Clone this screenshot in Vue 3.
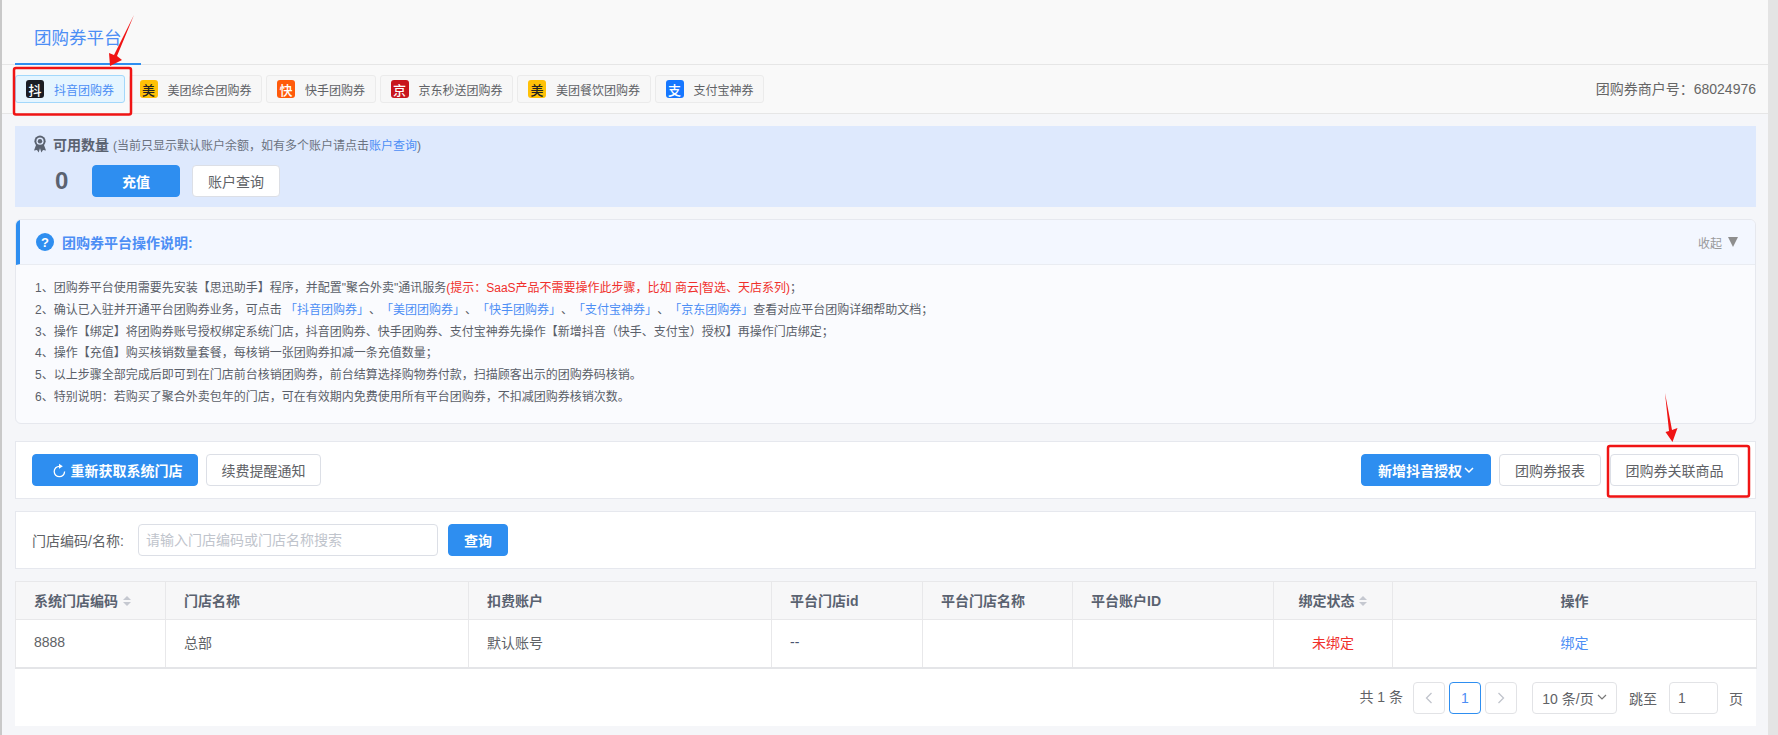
<template>
  <div class="page">
    <div class="rail"></div>

    <main class="main">
      <header class="tabs">
        <div class="tab-active">团购券平台</div>
      </header>

      <nav class="subbar">
        <div class="subtabs">
          <div
            v-for="item in platforms"
            :key="item.name"
            class="subtab"
            :class="{ active: item.active }"
          >
            <span class="logo" :class="item.cls">{{ item.mark }}</span>
            <span>{{ item.name }}</span>
          </div>
        </div>
        <div class="merchant">团购券商户号：68024976</div>
      </nav>

      <div class="content">
        <section class="balance">
          <div class="balance-title">
            <svg class="ribbon" width="14" height="18" viewBox="0 0 14 18">
              <path d="M3.2 9.5 1 15.5l3-.6 1.6 2.6L7 13.2l1.4 4.3 1.6-2.6 3 .6-2.2-6z" fill="#5a6270" />
              <circle cx="7" cy="6.2" r="5.6" fill="#5a6270" />
              <circle cx="7" cy="6.2" r="3.6" fill="#dee9fd" />
              <circle cx="7" cy="6.2" r="2.2" fill="#5a6270" />
            </svg>
            <strong>可用数量</strong>
            <span class="hint">(当前只显示默认账户余额，如有多个账户请点击<a class="link">账户查询</a>)</span>
          </div>
          <div class="balance-row">
            <span class="count">0</span>
            <button class="btn primary wide">充值</button>
            <button class="btn account">账户查询</button>
          </div>
        </section>

        <section class="guide">
          <div class="guide-head">
            <div class="guide-title">
              <span class="help">?</span>
              <span>团购券平台操作说明:</span>
            </div>
            <div class="collapse">收起 <span class="tri"></span></div>
          </div>
          <div class="guide-body">
            <p>1、团购券平台使用需要先安装【思迅助手】程序，并配置"聚合外卖"通讯服务<span class="red">(提示：SaaS产品不需要操作此步骤，比如 商云|智选、天店系列)</span>；</p>
            <p>2、确认已入驻并开通平台团购券业务，可点击 <a class="link">「抖音团购券」</a>、<a class="link">「美团团购券」</a>、<a class="link">「快手团购券」</a>、<a class="link">「支付宝神券」</a>、<a class="link">「京东团购券」</a>查看对应平台团购详细帮助文档；</p>
            <p>3、操作【绑定】将团购券账号授权绑定系统门店，抖音团购券、快手团购券、支付宝神券先操作【新增抖音（快手、支付宝）授权】再操作门店绑定；</p>
            <p>4、操作【充值】购买核销数量套餐，每核销一张团购券扣减一条充值数量；</p>
            <p>5、以上步骤全部完成后即可到在门店前台核销团购券，前台结算选择购物券付款，扫描顾客出示的团购券码核销。</p>
            <p>6、特别说明：若购买了聚合外卖包年的门店，可在有效期内免费使用所有平台团购券，不扣减团购券核销次数。</p>
          </div>
        </section>

        <section class="panel toolbar">
          <div class="group">
            <button class="btn primary refresh">
              <svg width="13" height="15" viewBox="0 0 13 15" fill="none">
                <path d="M11.6 8.5A5.2 5.2 0 1 1 6.4 3.3" stroke="#fff" stroke-width="1.3" />
                <path d="M6 .8 9.8 3.3 6 5.8z" fill="#fff" />
              </svg>
              重新获取系统门店
            </button>
            <button class="btn notify">续费提醒通知</button>
          </div>
          <div class="group">
            <button class="btn primary auth">
              新增抖音授权
              <svg width="10" height="7" viewBox="0 0 10 7" fill="none" stroke="#fff" stroke-width="1.5">
                <path d="M1 1l4 4 4-4" />
              </svg>
            </button>
            <button class="btn report">团购券报表</button>
            <button class="btn related">团购券关联商品</button>
          </div>
        </section>

        <section class="panel search">
          <label class="search-label">门店编码/名称:</label>
          <input class="search-input" placeholder="请输入门店编码或门店名称搜索" />
          <button class="btn primary query">查询</button>
        </section>

        <div class="result">
          <table class="table">
            <colgroup>
              <col v-for="col in columns" :key="col.title" :style="{ width: col.width + 'px' }" />
            </colgroup>
            <thead>
              <tr>
                <th v-for="col in columns" :key="col.title" :class="{ center: col.center }">
                  {{ col.title }}
                  <span v-if="col.sort" class="sorter"><i class="up"></i><i class="down"></i></span>
                </th>
              </tr>
            </thead>
            <tbody>
              <tr>
                <td>8888</td>
                <td>总部</td>
                <td>默认账号</td>
                <td class="dash">--</td>
                <td></td>
                <td></td>
                <td class="center red">未绑定</td>
                <td class="center"><a class="link">绑定</a></td>
              </tr>
            </tbody>
          </table>

          <div class="pager">
            <span class="total">共 1 条</span>
            <span class="page-btn muted">
              <svg width="8" height="12" viewBox="0 0 8 12" fill="none" stroke="#c0c4cc" stroke-width="1.3"><path d="M6.5 1 1.5 6l5 5" /></svg>
            </span>
            <span class="page-btn current">1</span>
            <span class="page-btn muted">
              <svg width="8" height="12" viewBox="0 0 8 12" fill="none" stroke="#c0c4cc" stroke-width="1.3"><path d="M1.5 1l5 5-5 5" /></svg>
            </span>
            <span class="page-size">
              10 条/页
              <svg width="10" height="7" viewBox="0 0 10 7" fill="none" stroke="#777" stroke-width="1.2"><path d="M1 1l4 4 4-4" /></svg>
            </span>
            <span class="jump">跳至</span>
            <span class="jump-input">1</span>
            <span class="jump-unit">页</span>
          </div>
        </div>
      </div>
    </main>

    <div class="scroll-strip"></div>

    <!-- annotations drawn on top of the screenshot -->
    <svg class="marks" width="1778" height="735" viewBox="0 0 1778 735">
      <rect x="14" y="68" width="117" height="46.5" rx="2" fill="none" stroke="#f01414" stroke-width="2.5" />
      <rect x="1608" y="446" width="141" height="50.5" rx="2" fill="none" stroke="#f01414" stroke-width="2.5" />
      <polygon points="134,15 117,56 122,60 110,66 109,53 114,55" fill="#f01414" />
      <polygon points="1665,393 1672,430 1677.5,428 1672.5,442 1665.5,432 1669,431" fill="#f01414" />
    </svg>
  </div>
</template>

<script setup>
const platforms = [
  { name: '抖音团购券', mark: '抖', cls: 'douyin', active: true },
  { name: '美团综合团购券', mark: '美', cls: 'meituan' },
  { name: '快手团购券', mark: '快', cls: 'kuaishou' },
  { name: '京东秒送团购券', mark: '京', cls: 'jd' },
  { name: '美团餐饮团购券', mark: '美', cls: 'meituan' },
  { name: '支付宝神券', mark: '支', cls: 'alipay' },
];

const columns = [
  { title: '系统门店编码', width: 150, sort: true },
  { title: '门店名称', width: 303 },
  { title: '扣费账户', width: 303 },
  { title: '平台门店id', width: 151 },
  { title: '平台门店名称', width: 150 },
  { title: '平台账户ID', width: 201 },
  { title: '绑定状态', width: 119, sort: true, center: true },
  { title: '操作', width: 364, center: true },
];
</script>

<style>
html,
body {
  background: #f5f6f9;
}
</style>

<style scoped>
.page {
  position: relative;
  display: flex;
  width: 1778px;
  height: 735px;
  overflow: hidden;
  font-family: "Liberation Sans", "Noto Sans CJK SC", sans-serif;
  font-size: 14px;
  color: #606266;
  background: #f5f6f9;
  text-spacing-trim: space-all;
}

.rail {
  width: 2px;
  background: #c9c9c9;
}

.scroll-strip {
  width: 10px;
  background: #e4e4e4;
}

.main {
  flex: 1;
  min-width: 0;
}

.tabs {
  height: 65px;
  box-sizing: border-box;
  padding-left: 13px;
  display: flex;
  align-items: flex-end;
  background: #f9f9f9;
  border-bottom: 1px solid #e6e6e6;
}

.tab-active {
  height: 64px;
  box-sizing: border-box;
  margin-bottom: -1px;
  padding: 24px 19px 0;
  font-size: 17.5px;
  line-height: 26px;
  color: #4c8ef5;
  border-bottom: 2px solid #2e8ef0;
}

.subbar {
  height: 49px;
  box-sizing: border-box;
  padding: 10px 12px 0 13px;
  display: flex;
  justify-content: space-between;
  background: #f9f9f9;
  border-bottom: 1px solid #e6e6e6;
}

.subtabs {
  display: flex;
  gap: 4px;
}

.subtab {
  height: 28px;
  box-sizing: border-box;
  padding: 0 9.5px 0 10px;
  display: flex;
  align-items: center;
  gap: 10px;
  font-size: 12px;
  color: #606266;
  border: 1px solid #ebebeb;
  border-radius: 3px;
  background: #f7f7f7;
}

.subtab.active {
  color: #4c8ef5;
  background: #e5f5ff;
  border-color: #a3d8fb;
}

.logo {
  width: 18px;
  height: 18px;
  border-radius: 3px;
  display: flex;
  align-items: center;
  justify-content: center;
  font-size: 13px;
  font-weight: 500;
  color: #fff;
}

.douyin {
  background: #1a1d24;
}

.meituan {
  background: #ffc107;
  color: #222;
}

.kuaishou {
  background: #ff5a0a;
}

.jd {
  background: #c8161d;
}

.alipay {
  background: #1677ff;
}

.merchant {
  line-height: 28px;
  color: #666;
}

.content {
  padding: 12px 12px 0 13px;
}

.balance {
  height: 81px;
  box-sizing: border-box;
  padding: 9px 0 0 18px;
  background: #dee9fd;
}

.balance-title {
  display: flex;
  align-items: center;
  height: 18px;
}

.ribbon {
  margin-right: 6px;
}

.balance-title strong {
  font-size: 14px;
  font-weight: 700;
  color: #5a6270;
}

.hint {
  margin-left: 4px;
  font-size: 12px;
  color: #6b7280;
}

.link {
  color: #4c8ef5;
  text-decoration: none;
}

.red {
  color: #f0302c;
}

.balance-row {
  display: flex;
  align-items: center;
  margin-top: 12px;
}

.count {
  width: 59px;
  padding-left: 22px;
  box-sizing: border-box;
  font-size: 24px;
  font-weight: 700;
  color: #5a6270;
}

.btn {
  height: 32px;
  box-sizing: border-box;
  padding: 0;
  display: inline-flex;
  align-items: center;
  justify-content: center;
  font-family: inherit;
  font-size: 14px;
  color: #606266;
  background: #fff;
  border: 1px solid #dcdfe6;
  border-radius: 4px;
}

.btn.primary {
  color: #fff;
  font-weight: 700;
  background: #2e8ef0;
  border-color: #2e8ef0;
}

.wide {
  width: 88px;
}

.account {
  width: 88px;
  margin-left: 12px;
}

.guide {
  height: 205px;
  box-sizing: border-box;
  margin-top: 12px;
  background: #fafbfe;
  border: 1px solid #e6e8ee;
  border-radius: 6px;
  overflow: hidden;
}

.guide-head {
  height: 45px;
  box-sizing: border-box;
  padding: 0 17px 0 16px;
  display: flex;
  align-items: center;
  justify-content: space-between;
  background: #f3f7ff;
  border-left: 4px solid #2e8ef0;
  border-bottom: 1px solid #e9ecf2;
}

.guide-title {
  display: flex;
  align-items: center;
  gap: 8px;
  font-size: 14px;
  font-weight: 700;
  color: #4c8ef5;
}

.help {
  width: 18px;
  height: 18px;
  border-radius: 50%;
  display: flex;
  align-items: center;
  justify-content: center;
  font-size: 13px;
  font-weight: 700;
  color: #fff;
  background: #2e8ef0;
}

.collapse {
  display: flex;
  align-items: center;
  gap: 6px;
  font-size: 12px;
  color: #999;
}

.tri {
  width: 0;
  height: 0;
  border-left: 5px solid transparent;
  border-right: 5px solid transparent;
  border-top: 10px solid #8e8e8e;
}

.guide-body {
  padding: 13px 0 0 19px;
  font-size: 12px;
  line-height: 21.8px;
  color: #5a5f69;
}

.guide-body p {
  margin: 0;
}

.panel {
  height: 58px;
  box-sizing: border-box;
  padding: 0 16px;
  display: flex;
  align-items: center;
  background: #fff;
  border: 1px solid #e6e8ee;
}

.toolbar {
  margin-top: 17px;
  justify-content: space-between;
}

.group {
  display: flex;
  align-items: center;
}

.refresh {
  width: 166px;
  gap: 5px;
  padding-left: 5px;
}

.notify {
  width: 115px;
  margin-left: 8px;
}

.auth {
  width: 130px;
  gap: 2px;
}

.report {
  width: 102px;
  margin-left: 8px;
}

.related {
  width: 129px;
  margin-left: 9px;
}

.search {
  margin-top: 12px;
}

.search-label {
  width: 106px;
}

.search-input {
  width: 300px;
  height: 32px;
  box-sizing: border-box;
  padding: 0 7px;
  font-family: inherit;
  font-size: 14px;
  color: #606266;
  background: #fff;
  border: 1px solid #dcdfe6;
  border-radius: 4px;
  outline: none;
}

.search-input::placeholder {
  color: #c0c4cc;
}

.query {
  width: 60px;
  margin-left: 10px;
}

.result {
  height: 145px;
  margin-top: 12px;
  background: #fff;
}

.table {
  width: 1741px;
  table-layout: fixed;
  border-collapse: collapse;
  background: #fff;
}

.table th,
.table td {
  box-sizing: border-box;
  padding: 0 18px;
  text-align: left;
  border: 1px solid #e8e8ea;
}

.table th {
  height: 38px;
  padding-bottom: 2px;
  font-weight: 700;
  color: #5a6270;
  background: #f7f7f8;
}

.table thead tr {
  border-top: 1px solid #dcdde3;
}

.table td {
  height: 48px;
  padding-bottom: 2px;
}

.table .dash {
  color: #4a5470;
}

.table tbody tr {
  border-bottom: 2px solid #e4e5e8;
}

.table .center {
  text-align: center;
}

.sorter {
  display: inline-flex;
  flex-direction: column;
  gap: 2px;
  margin-left: 1px;
  vertical-align: middle;
  margin-top: -1px;
}

.sorter i {
  width: 0;
  height: 0;
  border-left: 4px solid transparent;
  border-right: 4px solid transparent;
}

.sorter .up {
  border-bottom: 4px solid #c5c8d0;
}

.sorter .down {
  border-top: 4px solid #c5c8d0;
}

.pager {
  height: 58px;
  padding-right: 13px;
  display: flex;
  align-items: center;
  justify-content: flex-end;
}

.total {
  margin-right: 10px;
  margin-bottom: 3px;
}

.page-btn {
  width: 32px;
  height: 32px;
  box-sizing: border-box;
  margin-right: 4px;
  display: flex;
  align-items: center;
  justify-content: center;
  border: 1px solid #e2e3e6;
  border-radius: 4px;
}

.page-btn.current {
  color: #4c8ef5;
  border-color: #2e8ef0;
}

.page-size {
  width: 85px;
  height: 32px;
  box-sizing: border-box;
  margin-left: 11px;
  display: flex;
  align-items: center;
  justify-content: center;
  gap: 3px;
  border: 1px solid #e2e3e6;
  border-radius: 4px;
}

.jump {
  margin-left: 12px;
}

.jump-input {
  width: 49px;
  height: 32px;
  box-sizing: border-box;
  margin-left: 12px;
  padding-left: 8px;
  line-height: 30px;
  border: 1px solid #e2e3e6;
  border-radius: 4px;
}

.jump-unit {
  margin-left: 11px;
}

.marks {
  position: absolute;
  top: 0;
  left: 0;
  pointer-events: none;
}
</style>
